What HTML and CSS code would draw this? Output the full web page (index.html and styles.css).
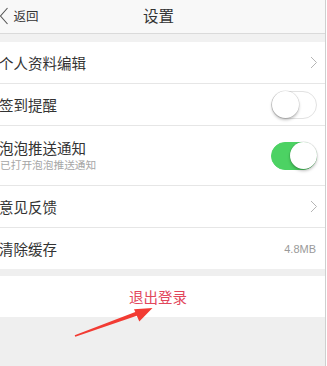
FILE: index.html
```html
<!DOCTYPE html>
<html lang="zh">
<head>
<meta charset="utf-8">
<title>设置</title>
<link rel="stylesheet" href="styles.css">
</head>
<body>
<div class="screen">
  <header class="topbar">
    <div class="back">
      <svg class="back-icon" width="9" height="18" viewBox="0 0 9 18"><polyline points="7.5,1 0.5,9 7.5,17" fill="none" stroke="#555" stroke-width="1.1"/></svg>
      <span>返回</span>
    </div>
    <div class="title">设置</div>
    <div></div>
  </header>
  <div class="gap-top"></div>
  <section class="group">
    <div class="row">
      <span class="label">个人资料编辑</span>
      <svg class="chev" width="8" height="13" viewBox="0 0 8 13"><polyline points="1,1 6.5,6.5 1,12" fill="none" stroke="#b5b5b5" stroke-width="1"/></svg>
    </div>
    <div class="row">
      <span class="label">签到提醒</span>
      <span class="switch"><span class="knob"></span></span>
    </div>
    <div class="row tall">
      <div class="texts">
        <span class="label">泡泡推送通知</span>
        <span class="sub">已打开泡泡推送通知</span>
      </div>
      <span class="switch on"><span class="knob"></span></span>
    </div>
    <div class="row">
      <span class="label">意见反馈</span>
      <svg class="chev" width="8" height="13" viewBox="0 0 8 13"><polyline points="1,1 6.5,6.5 1,12" fill="none" stroke="#b5b5b5" stroke-width="1"/></svg>
    </div>
    <div class="row last">
      <span class="label">清除缓存</span>
      <span class="value">4.8MB</span>
    </div>
  </section>
  <div class="gap-mid"></div>
  <div class="logout">退出登录</div>
  <div class="rest"></div>
  <svg class="arrow" width="327" height="366" viewBox="0 0 327 366">
    <polygon points="75.3,336.8 136.8,315.8 139.3,321.5 152.5,308 134,309.3 135.3,312 74.7,335.3" fill="#f23b33"/>
  </svg>
</div>
</body>
</html>
```
FILE: styles.css
```css
* { box-sizing: border-box; margin: 0; padding: 0; }
html, body { background: #ffffff; }
body {
  width: 327px;
  height: 366px;
  overflow: hidden;
  font-family: "Noto Sans CJK SC", "Noto Sans", "Liberation Sans", sans-serif;
  color: #333333;
}
.screen {
  position: relative;
  width: 326px;
  height: 366px;
  border-right: 1px solid #cfcfcf;
  background: #efefef;
  display: flex;
  flex-direction: column;
}
.topbar {
  height: 34px;
  background: #f8f8f8;
  border-bottom: 1px solid #dadada;
  display: grid;
  grid-template-columns: 52px 1fr 60px;
  align-items: center;
  padding-bottom: 3px;
}
.back {
  display: flex;
  align-items: center;
  gap: 5px;
  font-size: 12.5px;
  color: #333;
}
.back-icon { margin-left: -0.5px; margin-top: 1px; }
.title {
  text-align: center;
  font-size: 15.5px;
  color: #333;
}
.gap-top { height: 8px; background: #f1f1f1; }
.group { background: #ffffff; }
.row {
  height: 42px;
  border-bottom: 1px solid #e6e6e6;
  display: flex;
  align-items: center;
  justify-content: space-between;
  padding-right: 8px;
}
.row.tall { height: 60px; }
.row.last { border-bottom: none; height: 41px; }
.label {
  font-size: 14.5px;
  line-height: 18px;
  margin-left: -1px;
  color: #333;
}
.texts { display: flex; flex-direction: column; }
.sub {
  font-size: 10.7px;
  line-height: 14px;
  color: #a6a6a6;
  margin-top: 1px;
}
.chev { margin-right: -1px; }
.value {
  font-family: "Liberation Sans", sans-serif;
  font-size: 11px;
  color: #9a9a9a;
  margin-right: 1px;
}
.switch {
  position: relative;
  width: 46px;
  height: 28px;
  border-radius: 14px;
  background: #ffffff;
  border: 1px solid #e2e2e2;
}
.switch .knob {
  position: absolute;
  top: -0.5px;
  left: -0.5px;
  width: 27px;
  height: 27px;
  border-radius: 50%;
  background: #ffffff;
  box-shadow: 0 2px 3px rgba(0,0,0,0.25), 0 0 0 0.5px rgba(0,0,0,0.12);
}
.switch.on {
  background: #4cd263;
  border-color: #4cd263;
}
.switch.on .knob { left: auto; right: -0.5px; }
.gap-mid { height: 7px; background: #efefef; }
.logout {
  height: 41px;
  background: #ffffff;
  display: flex;
  align-items: center;
  justify-content: center;
  padding-right: 9px;
  font-size: 14.5px;
  color: #e2475c;
}
.rest { flex: 1; background: #efefef; }
.arrow { position: absolute; left: 0; top: 0; pointer-events: none; }
```
